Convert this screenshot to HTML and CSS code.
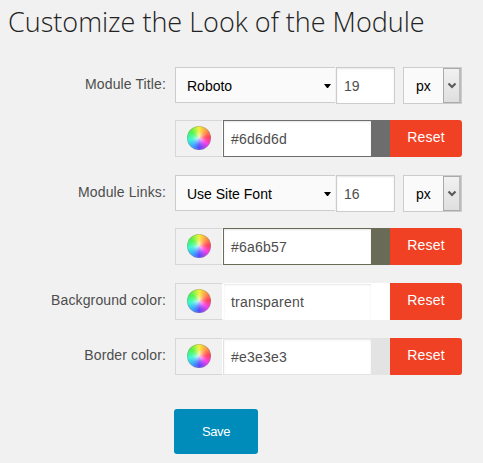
FILE: index.html
```
<!DOCTYPE html>
<html lang="en">
<head>
<meta charset="utf-8">
<title>Customize the Look of the Module</title>
<link rel="stylesheet" href="styles.css">
</head>
<body>
<h1>Customize the Look of the Module</h1>
<form>
  <div class="row">
    <span class="label">Module Title:</span>
    <div class="font-select"><span class="text">Roboto</span><i class="caret"></i></div>
    <div class="size"><span class="text">19</span></div>
    <div class="unit"><span class="text">px</span><span class="drop"><svg width="10" height="8" viewBox="0 0 10 8"><path d="M1.5 1.5 5 5 8.500 1.500"/></svg></span></div>
  </div>
  <div class="row sub">
    <div class="picker"><i class="wheel"></i></div>
    <div class="color gray"><span class="text">#6d6d6d</span></div>
    <div class="reset"><span class="text">Reset</span></div>
  </div>
  <div class="row">
    <span class="label">Module Links:</span>
    <div class="font-select"><span class="text">Use Site Font</span><i class="caret"></i></div>
    <div class="size"><span class="text">16</span></div>
    <div class="unit"><span class="text">px</span><span class="drop"><svg width="10" height="8" viewBox="0 0 10 8"><path d="M1.5 1.5 5 5 8.500 1.500"/></svg></span></div>
  </div>
  <div class="row sub">
    <div class="picker"><i class="wheel"></i></div>
    <div class="color olive"><span class="text">#6a6b57</span></div>
    <div class="reset"><span class="text">Reset</span></div>
  </div>
  <div class="row">
    <span class="label">Background color:</span>
    <div class="picker"><i class="wheel"></i></div>
    <div class="color clear"><span class="text">transparent</span></div>
    <div class="reset"><span class="text">Reset</span></div>
  </div>
  <div class="row">
    <span class="label">Border color:</span>
    <div class="picker"><i class="wheel"></i></div>
    <div class="color light"><span class="text">#e3e3e3</span></div>
    <div class="reset"><span class="text">Reset</span></div>
  </div>
  <div class="save"><span class="text">Save</span></div>
</form>
</body>
</html>
```
FILE: styles.css
```
* { box-sizing: border-box; }
body {
  margin: 0;
  background: #f1f1f1;
  color: #4d4d4d;
  font: 14px/20px "Liberation Sans", Arial, sans-serif;
}
h1 {
  margin: 0;
  padding: 4px 0 0 8px;
  height: 49px;
  font: 300 27px/36px "Open Sans", sans-serif;
  color: #222;
  white-space: nowrap;
}
.text { display: block; white-space: nowrap; }
.row { display: flex; height: 37px; margin-top: 18px; }
.row.sub { margin-top: 16px; padding-left: 175px; }
.label {
  width: 166px;
  margin-right: 9px;
  padding-top: 7px;
  text-align: right;
  white-space: nowrap;
  letter-spacing: .12px;
}
.font-select {
  display: flex;
  justify-content: space-between;
  width: 160px;
  height: 36px;
  margin-right: 1px;
  padding: 8px 4px 0 11px;
  border: 1px solid #ccc;
  border-right: 0;
  background: #fafafa;
  color: #000;
}
.caret {
  width: 7px;
  height: 4px;
  margin-top: 8px;
  background: #000;
  clip-path: polygon(0 0, 100% 0, 57% 100%, 43% 100%);
}
.size {
  width: 59px;
  margin-right: 8px;
  padding: 8px 7px;
  border: 1px solid #ccc;
  background: #fff;
  box-shadow: inset 0 1px 2px rgba(0, 0, 0, .1);
}
.unit {
  display: flex;
  justify-content: space-between;
  width: 59px;
  padding-left: 12px;
  border: 1px solid #ccc;
  background: #fafafa;
  color: #000;
}
.unit .text { padding-top: 8px; }
.drop {
  display: flex;
  align-items: center;
  justify-content: center;
  width: 18px;
  border: 1px solid #aaa;
  border-right-width: 2px;
  border-right-color: #bbb;
  background: linear-gradient(#f1f1f1, #dfdfdf);
}
.drop svg { fill: none; stroke: #5b5b5b; stroke-width: 2.2; }
.picker {
  display: flex;
  align-items: center;
  width: 48px;
  border: 1px solid #d7d7d7;
  border-right-color: #fff;
  padding-left: 11px;
}
.wheel {
  width: 24px;
  height: 24px;
  margin-top: -1px;
  border-radius: 50%;
  background:
    radial-gradient(circle, rgba(255,255,255,.75) 0, rgba(255,255,255,.15) 6px, transparent 9px, transparent 10.5px, rgba(130,130,130,.5) 12px),
    conic-gradient(#f4f03a, #ff9a45 45deg, #ff4058 85deg, #fa40e8 125deg, #5a48ff 178deg, #38b0ff 220deg, #3cf8d0 260deg, #4cf548 310deg, #f4f03a);
}
.color {
  width: 167px;
  padding: 8px 7px;
  border: 1px solid;
  border-right-width: 19px;
  background: #fff;
  box-shadow: inset 0 1px 2px rgba(0, 0, 0, .1);
  letter-spacing: .2px;
}
.color .text { color: #4d4d4d; }
.gray { border-color: #6d6d6d; }
.olive { border-color: #6a6b57; }
.clear { border-color: #fff; }
.light { border-color: #e3e3e3; }
.reset {
  width: 72px;
  padding-top: 7px;
  border-radius: 0 3px 3px 0;
  background: #f04124;
  color: #fff;
  text-align: center;
  letter-spacing: .2px;
}
.save {
  width: 84px;
  height: 45px;
  margin: 34px 0 0 174px;
  padding-top: 13px;
  border-radius: 3px;
  background: #008cba;
  color: #fff;
  font-size: 13px;
  letter-spacing: -.4px;
  text-align: center;
}
```
